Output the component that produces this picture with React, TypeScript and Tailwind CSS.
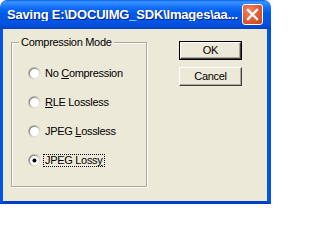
import type { ReactNode } from 'react'

type Option = { key: string; label: ReactNode; checked?: boolean }

const options: Option[] = [
  { key: 'none', label: <>No <u>C</u>ompression</> },
  { key: 'rle', label: <><u>R</u>LE Lossless</> },
  { key: 'jpeg', label: <>JPEG <u>L</u>ossless</> },
  { key: 'lossy', label: <>JPEG Loss<u>y</u></>, checked: true },
]

function Radio({ checked }: { checked?: boolean }) {
  return (
    <svg width="13" height="13" viewBox="0 0 13 13" className="shrink-0">
      <defs>
        <linearGradient id="ringOuter" x1="0" y1="0" x2="1" y2="1">
          <stop offset="0" stopColor="#9c9b92" />
          <stop offset="0.55" stopColor="#d6d3c4" />
          <stop offset="1" stopColor="#ffffff" />
        </linearGradient>
        <linearGradient id="ringInner" x1="0" y1="0" x2="1" y2="1">
          <stop offset="0" stopColor="#5a5a55" />
          <stop offset="0.6" stopColor="#d8d6cc" />
          <stop offset="1" stopColor="#f1efe2" />
        </linearGradient>
      </defs>
      <circle cx="6.5" cy="6.5" r="6.5" fill="url(#ringOuter)" />
      <circle cx="6.5" cy="6.5" r="5.5" fill="url(#ringInner)" />
      <circle cx="6.5" cy="6.5" r="4.5" fill="#ffffff" />
      {checked && <circle cx="6.5" cy="6.5" r="2" fill="#000000" />}
    </svg>
  )
}

function Button({ children, primary }: { children: ReactNode; primary?: boolean }) {
  return (
    <div
      className={
        primary
          ? 'h-[19px] w-[63px] border border-black bg-[#ece9d8]'
          : 'h-[19px] w-[63px] bg-[#ece9d8]'
      }
    >
      <div className="flex h-full w-full items-center justify-center border-t border-l border-t-white border-l-white border-r border-b border-r-[#404040] border-b-[#404040] text-[11px] leading-none text-black shadow-[inset_-1px_-1px_0_#aca899]">
        {children}
      </div>
    </div>
  )
}

export default function App() {
  return (
    <div className="h-[210px] w-[271px] bg-white font-['Liberation_Sans',Arial,sans-serif]">
      <div className="flex h-[204px] w-[271px] flex-col">
        {/* title bar */}
        <div className="flex h-[29px] shrink-0 items-center rounded-t-[7px] bg-[linear-gradient(to_bottom,#0a5fe8_0%,#3d95ff_7%,#2a86ff_14%,#0f6cf6_28%,#0059e8_48%,#0054e3_78%,#004cd8_90%,#0041c4_100%)] pl-[7px] pr-[8px]">
          <span className="flex-1 truncate text-[13px] font-bold leading-none tracking-[-0.2px] text-white [text-shadow:1px_1px_0_#0f1f8c]">
            Saving E:\DOCUIMG_SDK\Images\aa...
          </span>
          <div className="flex h-[21px] w-[21px] items-center justify-center rounded-[3px] border border-white bg-[radial-gradient(circle_at_35%_30%,#f08a68_0%,#e2603c_45%,#c9431f_100%)]">
            <svg width="19" height="19" viewBox="0 0 19 19">
              <path d="M5 5 L14 14 M14 5 L5 14" stroke="#ffffff" strokeWidth="2.3" strokeLinecap="square" />
            </svg>
          </div>
        </div>

        {/* client area with frame */}
        <div className="flex flex-1 border-r-[4px] border-b-[3px] border-l-[3px] border-[#0055e5] border-b-[#0040c8]">
          <div className="flex flex-1 items-start bg-[#ece9d8] pl-[8px] pt-[12px] text-[11px] tracking-[-0.3px] text-black">
            <div className="relative mt-[1px] h-[145px] w-[136px] border border-[#aca899] shadow-[inset_1px_1px_0_#ffffff,1px_1px_0_#ffffff]">
              <span className="absolute -top-[7px] left-[7px] bg-[#ece9d8] px-[2px] leading-[13px]">
                Compression Mode
              </span>
              <div className="flex flex-col gap-[16px] pl-[16px] pt-[24px]">
                {options.map((o) => (
                  <div key={o.key} className="flex h-[13px] items-center">
                    <Radio checked={o.checked} />
                    <span
                      className={
                        o.checked
                          ? 'ml-[2px] border border-dotted border-black px-[1px] leading-[11px]'
                          : 'ml-[2px] border border-transparent px-[1px] leading-[11px]'
                      }
                    >
                      {o.label}
                    </span>
                  </div>
                ))}
              </div>
            </div>
            <div className="ml-[32px] flex flex-col gap-[7px]">
              <Button primary>OK</Button>
              <Button>Cancel</Button>
            </div>
          </div>
        </div>
      </div>
    </div>
  )
}
